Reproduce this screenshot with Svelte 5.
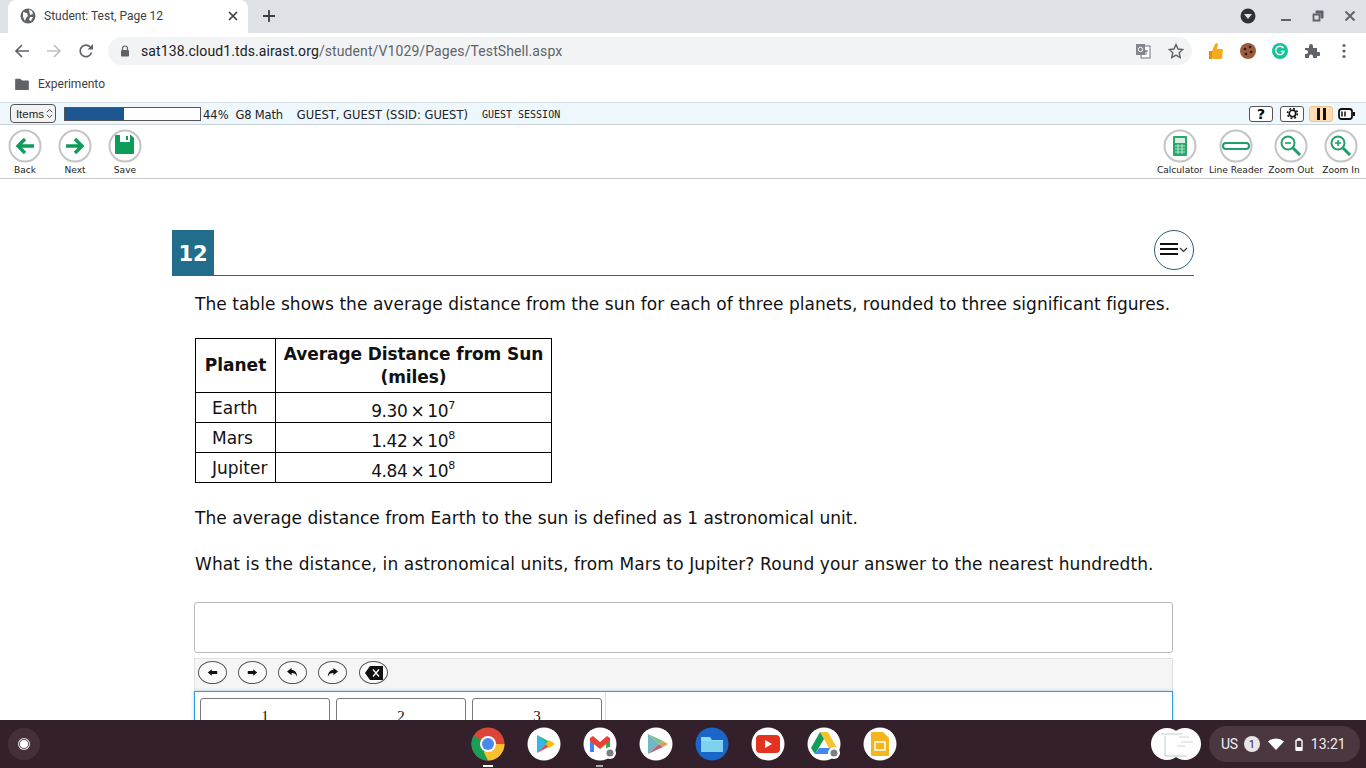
<script>
	const leftTools = [
		{ label: 'Back', icon: 'back' },
		{ label: 'Next', icon: 'next' },
		{ label: 'Save', icon: 'save' }
	];
	const rightTools = [
		{ label: 'Calculator', icon: 'calc' },
		{ label: 'Line Reader', icon: 'line' },
		{ label: 'Zoom Out', icon: 'out' },
		{ label: 'Zoom In', icon: 'in' }
	];
	const planets = [
		{ name: 'Earth', base: '9.30', exp: 7, cls: 'earth' },
		{ name: 'Mars', base: '1.42', exp: 8, cls: 'mars' },
		{ name: 'Jupiter', base: '4.84', exp: 8, cls: 'jupiter' }
	];
</script>

{#snippet toolIcon(icon)}
	<svg viewBox="0 0 34 34" width="34" height="34">
		<circle cx="17" cy="17" r="15.5" fill="#fff" stroke="#c4c4c4" stroke-width="2" />
		{#if icon === 'back'}
			<path d="M26 17H10M17 10l-7 7 7 7" fill="none" stroke="#0e9d58" stroke-width="3.4" />
		{:else if icon === 'next'}
			<path d="M8 17h16M17 10l7 7-7 7" fill="none" stroke="#0e9d58" stroke-width="3.4" />
		{:else if icon === 'save'}
			<path d="M8 6h15l3 3v15a1 1 0 0 1-1 1H8a1 1 0 0 1-1-1V7a1 1 0 0 1 1-1z" fill="#0e9d58" />
			<rect x="12" y="6" width="10" height="7" fill="#fff" />
			<rect x="18" y="7" width="2" height="4" fill="#0e9d58" />
		{:else if icon === 'calc'}
			<rect x="10" y="7" width="14" height="20" rx="1" fill="#2aa86c" />
			<rect x="12" y="9" width="10" height="5" fill="#d8f0e4" />
			<path d="M12 17h10M12 20h10M12 23h10M15 15v10M19 15v10" stroke="#d8f0e4" stroke-width="0.8" />
		{:else if icon === 'line'}
			<rect x="4" y="14" width="26" height="6" rx="3" fill="#fff" stroke="#1e9e68" stroke-width="2" />
		{:else}
			<circle cx="14" cy="14" r="6.5" fill="#fff" stroke="#1e9e68" stroke-width="2" />
			<path d="M19 19l7 7" stroke="#1e9e68" stroke-width="3" />
			<path d={icon === 'in' ? 'M11 14h6M14 11v6' : 'M11 14h6'} stroke="#1e9e68" stroke-width="1.6" />
		{/if}
	</svg>
{/snippet}

<div class="screen">
	<div class="tabstrip">
		<div class="tab">
			<svg class="globe" viewBox="0 0 16 16" width="16" height="16">
				<circle cx="8" cy="8" r="7.5" fill="#5f6368" />
				<path d="M3 4l4 1 1 3-2 2-1 3-2-4zM9 1.500l3 1.500 1 3-3 1zM10 9l3 0-2 4-2-1z" fill="#fff" />
			</svg>
			<span class="tab-title">Student: Test, Page 12</span>
			<svg class="tab-close" viewBox="0 0 10 10" width="10" height="10">
				<path d="M1 1l8 8M9 1l-8 8" stroke="#3c4043" stroke-width="1.700" />
			</svg>
		</div>
		<svg class="newtab" viewBox="0 0 12 12" width="12" height="12">
			<path d="M6 0v12M0 6h12" stroke="#3c4043" stroke-width="1.800" />
		</svg>
		<div class="strip-right">
			<svg viewBox="0 0 16 16" width="16" height="16">
				<circle cx="8" cy="8" r="7.5" fill="#303236" />
				<path d="M4 6h8l-4 5z" fill="#dee1e6" />
			</svg>
			<svg class="win min" viewBox="0 0 12 12" width="12" height="12">
				<path d="M1 10h10" stroke="#5f6368" stroke-width="2" />
			</svg>
			<svg class="win" viewBox="0 0 12 12" width="12" height="12">
				<path d="M4 1h7v7H9V3H4z" fill="#5f6368" stroke="#5f6368" stroke-width="1" />
				<path d="M1.500 4.500h6v6h-6z" fill="none" stroke="#5f6368" stroke-width="1.800" />
			</svg>
			<svg class="win" viewBox="0 0 12 12" width="12" height="12">
				<path d="M1.500 1.500l9 9M10.500 1.500l-9 9" stroke="#5f6368" stroke-width="1.900" />
			</svg>
		</div>
	</div>

	<div class="toolbar">
		<svg class="nav" viewBox="0 0 16 16" width="16" height="16">
			<path d="M15 8H2M8 2L2 8l6 6" fill="none" stroke="#5f6368" stroke-width="1.700" />
		</svg>
		<svg class="nav" viewBox="0 0 16 16" width="16" height="16">
			<path d="M1 8h13M8 2l6 6-6 6" fill="none" stroke="#bdc1c6" stroke-width="1.700" />
		</svg>
		<svg class="nav" viewBox="0 0 16 16" width="16" height="16">
			<path d="M13.500 9.500A5.800 5.800 0 1 1 12.300 4" fill="none" stroke="#5f6368" stroke-width="1.700" />
			<path d="M9.500 6.500H15V1z" fill="#5f6368" />
		</svg>
		<div class="omnibox">
			<svg class="lock" viewBox="0 0 10 12" width="10" height="12">
				<path d="M2.500 5V3.500a2.500 2.500 0 0 1 5 0V5" fill="none" stroke="#5f6368" stroke-width="1.200" />
				<rect x="1" y="5" width="8" height="6.500" rx="1" fill="#5f6368" />
			</svg>
			<span class="url"><b>sat138.cloud1.tds.airast.org</b>/student/V1029/Pages/TestShell.aspx</span>
			<svg class="translate" viewBox="0 0 16 16" width="16" height="16">
				<rect x="6" y="3" width="9" height="12" fill="#fff" stroke="#70757a" />
				<rect x="1" y="1" width="9" height="11" fill="#80868b" />
				<circle cx="5.500" cy="6.500" r="2.200" fill="none" stroke="#fff" />
				<path d="M9 8h4M11 7v5" stroke="#70757a" />
			</svg>
			<svg class="star" viewBox="0 0 16 16" width="16" height="16">
				<path d="M8 1.500l2 4.500 4.800.5-3.600 3.200 1 4.800L8 12.100l-4.200 2.400 1-4.800L1.200 6.500 6 6z" fill="none" stroke="#5f6368" stroke-width="1.400" />
			</svg>
		</div>
		<div class="extensions">
			<svg viewBox="0 0 16 16" width="16" height="16">
				<path d="M7 1l2-1 1 1-1 5h5l1 1-1 8-1 1H5l-1-1V8z" fill="#f5ab1b" />
				<rect x="1" y="8" width="3" height="8" fill="#e58f0a" />
			</svg>
			<svg viewBox="0 0 16 16" width="16" height="16">
				<circle cx="8" cy="8" r="8" fill="#9b5a3c" />
				<circle cx="5" cy="6" r="1.300" fill="#2a1a14" />
				<circle cx="10" cy="4" r="1.200" fill="#2a1a14" />
				<circle cx="11" cy="9" r="1.300" fill="#2a1a14" />
				<circle cx="6" cy="11" r="1.300" fill="#2a1a14" />
			</svg>
			<svg viewBox="0 0 16 16" width="16" height="16">
				<circle cx="8" cy="8" r="8" fill="#15c39a" />
				<path d="M11.500 5.200A4.200 4.200 0 1 0 12 8.500H8.800" fill="none" stroke="#fff" stroke-width="1.400" />
			</svg>
			<svg viewBox="0 0 16 16" width="16" height="16">
				<path d="M1 5h4V3a2 2 0 0 1 4 0v2h4v4h1.500a2 2 0 0 1 0 4H13v2H9v-1.500a2 2 0 0 0-4 0V15H1v-4h1a2 2 0 0 0 0-4H1z" fill="#5f6368" />
			</svg>
			<svg viewBox="0 0 16 16" width="16" height="16">
				<circle cx="8" cy="2.500" r="1.600" fill="#5f6368" />
				<circle cx="8" cy="8" r="1.600" fill="#5f6368" />
				<circle cx="8" cy="13.500" r="1.600" fill="#5f6368" />
			</svg>
		</div>
	</div>

	<div class="bookmarks">
		<svg viewBox="0 0 16 14" width="14" height="12">
			<path d="M0 2a1 1 0 0 1 1-1h5l2 2h7a1 1 0 0 1 1 1v9a1 1 0 0 1-1 1H1a1 1 0 0 1-1-1z" fill="#5f6368" />
		</svg>
		<span>Experimento</span>
	</div>

	<main class="page">
		<div class="status">
			<div class="items">Items
				<svg viewBox="0 0 8 12" width="7" height="11">
					<path d="M1 4.500L4 1.500l3 3M1 7.500l3 3 3-3" fill="none" stroke="#333" stroke-width="1" />
				</svg>
			</div>
			<div class="progress"><div class="fill" style="width: 44%"></div></div>
			<span class="pct">44%</span>
			<span class="subject">G8 Math</span>
			<span class="guest">GUEST, GUEST (SSID: GUEST)</span>
			<span class="session">GUEST SESSION</span>
			<div class="status-right">
				<span class="sbtn help">?</span>
				<span class="sbtn">
					<svg viewBox="0 0 14 14" width="13" height="13">
						<circle cx="7" cy="7" r="3.500" fill="none" stroke="#111" stroke-width="1.700" />
						<circle cx="7" cy="7" r="5.300" fill="none" stroke="#111" stroke-width="1.800" stroke-dasharray="2 2.160" />
					</svg>
				</span>
				<span class="sbtn pause"><i></i><i></i></span>
				<svg class="battery" viewBox="0 0 17 12" width="17" height="12">
					<rect x="1" y="1" width="13" height="10" rx="2.500" fill="#fff" stroke="#111" stroke-width="1.800" />
					<path d="M4 3.500v5M7 3.500v5" stroke="#111" stroke-width="1.500" />
					<rect x="15" y="4" width="2" height="4" fill="#111" />
				</svg>
			</div>
		</div>

		<div class="tools">
			<div class="tool-group left">
				{#each leftTools as tool}
					<div class="tool">
						{@render toolIcon(tool.icon)}
						<span>{tool.label}</span>
					</div>
				{/each}
			</div>
			<div class="tool-group right">
				{#each rightTools as tool}
					<div class="tool">
						{@render toolIcon(tool.icon)}
						<span>{tool.label}</span>
					</div>
				{/each}
			</div>
		</div>

		<section class="question">
			<div class="q-head">
				<div class="q-num">12</div>
				<div class="q-menu">
					<svg viewBox="0 0 40 40" width="40" height="40">
						<circle cx="20" cy="20" r="19.500" fill="#fff" stroke="#2b5f75" />
						<path d="M6 14h18M6 19h18M6 24h18" stroke="#111" stroke-width="1.800" />
						<path d="M26 18l3.500 3.500L33 18" fill="none" stroke="#333" stroke-width="1.200" />
					</svg>
				</div>
			</div>

			<div class="q-body">
				<p class="stem">The table shows the average distance from the sun for each of three planets, rounded to three significant figures.</p>

				<table>
					<thead>
						<tr>
							<th class="col-planet">Planet</th>
							<th class="col-dist">Average Distance from Sun<br />(miles)</th>
						</tr>
					</thead>
					<tbody>
						{#each planets as p}
							<tr>
								<td class="name {p.cls}">{p.name}</td>
								<td class="val">{p.base}<span class="times">×</span>10<sup>{p.exp}</sup></td>
							</tr>
						{/each}
					</tbody>
				</table>

				<p class="para first">The average distance from Earth to the sun is defined as 1 astronomical unit.</p>
				<p class="para second">What is the distance, in astronomical units, from Mars to Jupiter? Round your answer to the nearest hundredth.</p>

				<div class="answer"></div>

				<div class="editor-bar">
					<span class="ebtn">
						<svg viewBox="0 0 14 10" width="11" height="9"><path d="M6 1L1 5l5 4V6.800h7V3.200H6z" fill="#111" /></svg>
					</span>
					<span class="ebtn">
						<svg viewBox="0 0 14 10" width="11" height="9"><path d="M8 1l5 4-5 4V6.800H1V3.200h7z" fill="#111" /></svg>
					</span>
					<span class="ebtn">
						<svg viewBox="0 0 14 12" width="13" height="11"><path d="M6 1L1 5l5 4V6.500c3 0 5 1 6 4 0-4-2-7-6-7.500z" fill="#111" /></svg>
					</span>
					<span class="ebtn">
						<svg viewBox="0 0 14 12" width="13" height="11"><path d="M8 1l5 4-5 4V6.500c-3 0-5 1-6 4 0-4 2-7 6-7.500z" fill="#111" /></svg>
					</span>
					<span class="ebtn del">
						<svg viewBox="0 0 18 14" width="18" height="14">
							<path d="M5 0h13v14H5L0 7z" fill="#111" />
							<path d="M8 3.500l6 7M14 3.500l-6 7" stroke="#fff" stroke-width="1.300" />
						</svg>
					</span>
				</div>

				<div class="keypad">
					<div class="key">1</div>
					<div class="key">2</div>
					<div class="key">3</div>
					<div class="key-rule"></div>
				</div>
			</div>
		</section>
	</main>

	<footer class="shelf">
		<div class="launcher"><span></span></div>
		<div class="apps">
			<div class="app chrome">
				<svg viewBox="0 0 34 34" width="34" height="34">
					<circle cx="17" cy="17" r="16.500" fill="#db4437" />
					<path d="M17 17L2.700 8.800A16.500 16.500 0 0 0 17 33.500l8-16z" fill="#1a9e55" />
					<path d="M17 17h16.500A16.500 16.500 0 0 1 17 33.500l-4-8z" fill="#fbc02d" />
					<circle cx="17" cy="17" r="8" fill="#fff" />
					<circle cx="17" cy="17" r="6" fill="#4a88ee" />
				</svg>
				<i class="dot wide"></i>
			</div>
			<div class="app">
				<svg viewBox="0 0 34 34" width="34" height="34">
					<circle cx="17" cy="17" r="16.500" fill="#fff" />
					<path d="M10 8l12 9-12 9z" fill="#35b6e8" />
					<path d="M10 8l17 9-5 2z" fill="#3bb873" />
					<path d="M10 26l17-9-5-2z" fill="#e8464a" />
					<path d="M22 13l6 4-6 4-3-4z" fill="#fbbc04" />
				</svg>
			</div>
			<div class="app">
				<svg viewBox="0 0 34 34" width="34" height="34">
					<circle cx="17" cy="17" r="16.500" fill="#fff" />
					<path d="M7 11v14h4V14z" fill="#4285f4" />
					<path d="M27 11v14h-4V14z" fill="#34a853" />
					<path d="M7 11l3-2 7 6 7-6 3 2v3l-10 8-10-8z" fill="#ea4335" />
					<circle cx="27" cy="26" r="6" fill="#fff" />
					<circle cx="27" cy="26" r="3.500" fill="#7a7f85" />
				</svg>
				<i class="dot"></i>
			</div>
			<div class="app">
				<svg viewBox="0 0 34 34" width="34" height="34">
					<circle cx="17" cy="17" r="16.500" fill="#fff" />
					<path d="M9 7l11 10L9 27z" fill="#6fb6c6" />
					<path d="M9 7l15 7-4 3z" fill="#7bbf8a" />
					<path d="M9 27l15-7-4-3z" fill="#b8657a" />
					<path d="M24 14l5 3-5 3-4-3z" fill="#d9a05a" />
				</svg>
			</div>
			<div class="app">
				<svg viewBox="0 0 34 34" width="34" height="34">
					<circle cx="17" cy="17" r="16.500" fill="#1a66c9" />
					<path d="M6 10h9l2 3h11v12H6z" fill="#8fdcf5" />
					<rect x="6" y="14" width="22" height="11" rx="1" fill="#7ed2f0" />
				</svg>
			</div>
			<div class="app">
				<svg viewBox="0 0 34 34" width="34" height="34">
					<circle cx="17" cy="17" r="16.500" fill="#fff" />
					<rect x="5" y="8" width="24" height="18" rx="4" fill="#e3321f" />
					<path d="M14 13l7 4-7 4z" fill="#fff" />
				</svg>
			</div>
			<div class="app">
				<svg viewBox="0 0 34 34" width="34" height="34">
					<circle cx="17" cy="17" r="16.500" fill="#fff" />
					<path d="M13 5h8l9 16h-8z" fill="#f7c22c" />
					<path d="M13 5l4 7-9 15-4-6z" fill="#159c58" />
					<path d="M8 27l4-6h18l-4 6z" fill="#4285f4" />
					<circle cx="27" cy="26" r="6" fill="#fff" />
					<circle cx="27" cy="26" r="3.500" fill="#7a7f85" />
				</svg>
			</div>
			<div class="app">
				<svg viewBox="0 0 34 34" width="34" height="34">
					<circle cx="17" cy="17" r="16.500" fill="#fff" />
					<path d="M9 5h11l6 6v17a1 1 0 0 1-1 1H9a1 1 0 0 1-1-1V6a1 1 0 0 1 1-1z" fill="#f5b51d" />
					<rect x="12" y="15" width="10" height="8" fill="none" stroke="#fff" stroke-width="1.500" />
				</svg>
			</div>
		</div>
		<div class="thumb">
			<svg viewBox="0 0 50 32" width="50" height="32">
				<circle cx="16" cy="16" r="16" fill="#fff" />
				<circle cx="34" cy="16" r="16" fill="#fff" />
				<path d="M10 6h22M14 8v20M14 28h22" stroke="#9aa4ad" stroke-width="0.600" />
				<path d="M28 9h10M30 14h12M26 18h8" stroke="#c4c8cc" stroke-width="0.800" />
			</svg>
		</div>
		<div class="tray">
			<span class="lang">US</span>
			<span class="badge">1</span>
			<svg class="wifi" viewBox="0 0 16 12" width="16" height="12"><path d="M0 3.500a12 12 0 0 1 16 0L8 12z" fill="#fff" /></svg>
			<svg class="batt" viewBox="0 0 8 13" width="8" height="13">
				<rect x="2.500" y="0" width="3" height="2" fill="#fff" />
				<rect x="1" y="2" width="6" height="10.500" rx="1" fill="none" stroke="#fff" stroke-width="1.400" />
				<rect x="1" y="9" width="6" height="3.500" fill="#fff" />
			</svg>
			<span class="clock">13:21</span>
		</div>
	</footer>
</div>

<style>
	:global(body) {
		margin: 0;
		background: #fff;
	}

	.screen {
		display: flex;
		flex-direction: column;
		width: 1366px;
		height: 768px;
		overflow: hidden;
		font-family: 'DejaVu Sans', Verdana, sans-serif;
		color: #111;
	}

	/* browser chrome */
	.tabstrip {
		display: flex;
		align-items: center;
		height: 33px;
		flex: none;
		background: #dee1e6;
		font-family: Roboto, 'Liberation Sans', sans-serif;
	}

	.tab {
		display: flex;
		align-items: center;
		width: 240px;
		height: 33px;
		margin-left: 8px;
		padding: 0 10px 2px 12px;
		box-sizing: border-box;
		background: #fff;
		border-radius: 8px 8px 0 0;
	}

	.tab-title {
		margin-left: 8px;
		font-size: 12px;
		color: #3c4043;
		flex: 1;
	}

	.newtab {
		margin-left: 15px;
		margin-bottom: 2px;
	}

	.strip-right {
		display: flex;
		align-items: center;
		margin-left: auto;
		padding-right: 10px;
		padding-bottom: 1px;
	}

	.win {
		margin-left: 20px;
	}

	.win.min {
		margin-left: 24px;
	}

	.toolbar {
		display: flex;
		align-items: center;
		height: 35px;
		flex: none;
		background: #fff;
		font-family: Roboto, 'Liberation Sans', sans-serif;
	}

	.nav {
		margin-left: 14px;
		margin-right: 2px;
	}

	.omnibox {
		display: flex;
		align-items: center;
		width: 1084px;
		height: 28px;
		margin-left: 12px;
		padding: 0 8px 0 12px;
		box-sizing: border-box;
		border-radius: 14px;
		background: #f1f3f4;
	}

	.lock {
		margin-right: 11px;
	}

	.url {
		flex: 1;
		font-size: 14px;
		letter-spacing: 0.1px;
		color: #5f6368;
		white-space: nowrap;
	}

	.url b {
		font-weight: 400;
		color: #202124;
	}

	.star {
		margin-left: 17px;
	}

	.extensions {
		display: flex;
		align-items: center;
		gap: 16px;
		margin-left: 16px;
	}

	.bookmarks {
		display: flex;
		align-items: center;
		gap: 9px;
		height: 32px;
		flex: none;
		padding-left: 15px;
		padding-bottom: 1px;
		box-sizing: border-box;
		font-family: Roboto, 'Liberation Sans', sans-serif;
		font-size: 12px;
		color: #3c4043;
	}

	/* test shell */
	.page {
		flex: 1;
		min-height: 0;
		overflow: hidden;
		padding-top: 2px;
		background: #fff;
	}

	.status {
		display: flex;
		align-items: center;
		height: 23px;
		padding-left: 10px;
		box-sizing: border-box;
		background: #eef7fc;
		border-top: 1px solid #d5e0e6;
		border-bottom: 1px solid #c9d3d9;
		font-size: 11.500px;
		color: #222;
	}

	.status > span {
		padding-top: 2px;
	}

	.items {
		display: flex;
		align-items: center;
		justify-content: flex-end;
		gap: 2px;
		width: 46px;
		height: 19px;
		padding-right: 2px;
		box-sizing: border-box;
		border: 1px solid #555;
		border-radius: 4px;
		background: #f3f3f3;
		font-family: 'Liberation Sans', sans-serif;
		font-size: 11.500px;
	}

	.progress {
		width: 135px;
		height: 12px;
		margin-left: 8px;
		border: 1px solid #555;
		background: #fff;
	}

	.fill {
		height: 100%;
		background: #1c5690;
	}

	.pct {
		margin-left: 2px;
	}

	.subject {
		margin-left: 7px;
		letter-spacing: -0.2px;
	}

	.guest {
		margin-left: 14px;
	}

	.session {
		margin-left: 14px;
		font-family: 'DejaVu Sans Mono', monospace;
		font-size: 10px;
	}

	.status-right {
		display: flex;
		align-items: center;
		margin-left: auto;
		padding-right: 11px;
		gap: 5px;
	}

	.sbtn {
		display: flex;
		align-items: center;
		justify-content: center;
		gap: 3px;
		width: 24px;
		height: 16px;
		box-sizing: border-box;
		border: 1px solid #555;
		border-radius: 3px;
		background: #fff;
	}

	.help {
		margin-right: 2px;
		font-weight: 700;
		font-size: 14px;
		color: #000;
	}

	.pause {
		background: #ffdcb4;
		border-color: #f0c48c;
	}

	.pause i {
		width: 3px;
		height: 12px;
		background: #111;
	}

	.tools {
		display: flex;
		justify-content: space-between;
		height: 54px;
		box-sizing: border-box;
		padding-top: 4px;
		border-bottom: 1px solid #c8c8c8;
	}

	.tool-group {
		display: flex;
	}

	.tool-group.left {
		padding-left: 8px;
		gap: 16px;
	}

	.tool-group.left .tool {
		width: 34px;
	}

	.tool-group.right {
		padding-right: 5px;
		gap: 5px;
	}

	.tool-group.right .tool:nth-child(1) {
		width: 52px;
	}

	.tool-group.right .tool:nth-child(2),
	.tool-group.right .tool:nth-child(3) {
		width: 50px;
	}

	.tool-group.right .tool:nth-child(4) {
		width: 40px;
	}

	.tool {
		display: flex;
		flex-direction: column;
		align-items: center;
		gap: 2px;
	}

	.tool span {
		font-size: 9.100px;
		color: #222;
		white-space: nowrap;
	}

	.question {
		width: 1022px;
		margin-left: 172px;
		padding-top: 51px;
	}

	.q-head {
		display: flex;
		align-items: flex-end;
		justify-content: space-between;
		height: 45px;
		border-bottom: 1px solid #1f6f73;
	}

	.q-num {
		display: flex;
		align-items: center;
		justify-content: center;
		width: 42px;
		height: 45px;
		padding-top: 2px;
		box-sizing: border-box;
		background: #236d8c;
		color: #fff;
		font-weight: 700;
		font-size: 21px;
	}

	.q-menu {
		align-self: flex-start;
		height: 40px;
	}

	.q-body {
		padding: 0 22px 0 23px;
		font-size: 17px;
		line-height: 23px;
	}

	.stem {
		margin: 17px 0 0;
		white-space: nowrap;
		letter-spacing: 0.045px;
	}

	table {
		margin-top: 22px;
		border-collapse: collapse;
		width: 357px;
		font-size: 17px;
	}

	th,
	td {
		border: 1px solid #000;
		padding: 0;
	}

	.col-planet {
		width: 80px;
		height: 54px;
		padding-bottom: 1px;
		box-sizing: border-box;
	}

	th {
		line-height: 23px;
	}

	.col-dist {
		letter-spacing: -0.08px;
	}

	td {
		height: 30px;
		box-sizing: border-box;
	}

	.name {
		padding-top: 1px;
	}

	.earth {
		padding-left: 16px;
	}

	.mars {
		padding-left: 16px;
	}

	.jupiter {
		padding-left: 16px;
	}

	.val {
		text-align: center;
		line-height: 22px;
		padding-top: 7px;
		padding-right: 1px;
		letter-spacing: -0.4px;
	}

	.times {
		margin: 0 3px;
	}

	sup {
		font-size: 11px;
		line-height: 0;
		vertical-align: 8px;
	}

	.para {
		margin: 0;
		white-space: nowrap;
	}

	.para.first {
		margin-top: 24px;
		letter-spacing: 0.04px;
	}

	.para.second {
		margin-top: 23px;
		letter-spacing: 0.11px;
	}

	.answer {
		height: 51px;
		margin: 26px -1px 0;
		box-sizing: border-box;
		border: 1px solid #bbb;
		border-radius: 3px;
	}

	.editor-bar {
		display: flex;
		align-items: center;
		gap: 11px;
		height: 33px;
		margin: 5px -1px 0;
		padding: 0 0 5px 3px;
		background: #f5f5f5;
		border: 1px solid #e2e2e2;
		border-bottom: 0;
		box-sizing: border-box;
	}

	.ebtn {
		display: flex;
		align-items: center;
		justify-content: center;
		width: 29px;
		height: 23px;
		box-sizing: border-box;
		border: 1px solid #555;
		border-radius: 50%;
		background: #fafafa;
	}

	.ebtn.del {
		margin-left: 1px;
	}

	.keypad {
		display: flex;
		gap: 6px;
		height: 60px;
		margin: 0 -1px;
		padding: 6px 0 0 5px;
		box-sizing: border-box;
		border: 1px solid #2e9fd6;
		box-shadow: 0 0 3px rgba(70, 170, 225, 0.5);
	}

	.key {
		width: 130px;
		height: 50px;
		box-sizing: border-box;
		padding-top: 7px;
		text-align: center;
		border: 1px solid #777;
		border-radius: 3px;
		font-family: 'Liberation Serif', serif;
		font-size: 15px;
		line-height: 20px;
	}

	.key-rule {
		margin-left: -3px;
		width: 1px;
		height: 60px;
		margin-top: -6px;
		background: #ddd;
	}

	/* chrome os shelf */
	.shelf {
		display: flex;
		align-items: center;
		height: 48px;
		flex: none;
		background: #33202a;
		font-family: Roboto, 'Liberation Sans', sans-serif;
	}

	.shelf > * {
		flex: none;
	}

	.launcher {
		display: flex;
		align-items: center;
		justify-content: center;
		width: 32px;
		height: 32px;
		margin-left: 8px;
		border-radius: 50%;
		background: #44303a;
	}

	.launcher span {
		width: 8px;
		height: 8px;
		border-radius: 50%;
		background: #fff;
		box-shadow: 0 0 0 1px #5a4650, 0 0 0 2px #e8e4e6;
	}

	.apps {
		display: flex;
		gap: 22px;
		margin-left: 431px;
	}

	.app {
		position: relative;
		width: 34px;
		height: 34px;
	}

	.dot {
		position: absolute;
		left: 13px;
		bottom: -6px;
		width: 7px;
		height: 2px;
		background: #aaa;
	}

	.dot.wide {
		left: 12px;
		width: 10px;
		background: #fff;
	}

	.thumb {
		display: flex;
		margin-left: 254px;
	}

	.tray {
		display: flex;
		align-items: center;
		width: 151px;
		height: 36px;
		margin-left: 8px;
		padding-left: 12px;
		box-sizing: border-box;
		border-radius: 18px;
		background: #4a3740;
		color: #f1eef0;
		font-size: 14px;
	}

	.lang {
		letter-spacing: -0.3px;
	}

	.badge {
		display: flex;
		align-items: center;
		justify-content: center;
		width: 16px;
		height: 16px;
		margin-left: 6px;
		border-radius: 50%;
		background: #e8e6e7;
		color: #33202a;
		font-size: 11px;
	}

	.wifi {
		margin-left: 8px;
	}

	.batt {
		margin-left: 11px;
	}

	.clock {
		margin-left: 8px;
	}
</style>
